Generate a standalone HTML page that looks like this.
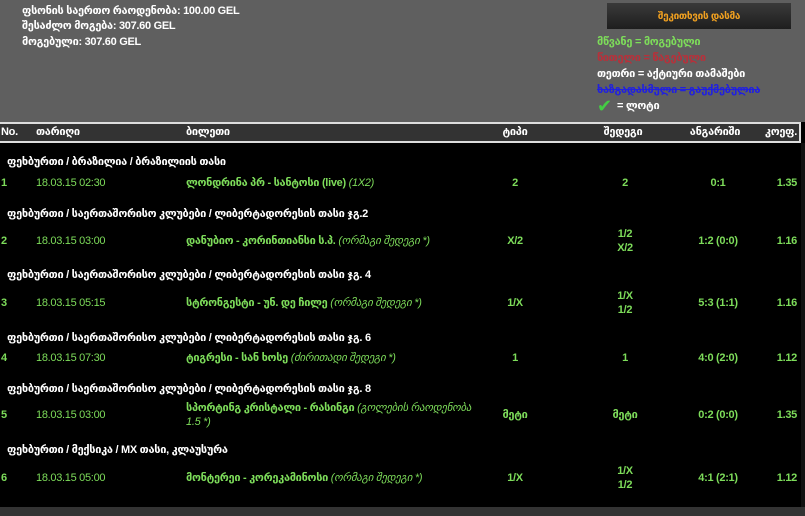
<!DOCTYPE html>
<html><head><meta charset="utf-8"><style>
*{margin:0;padding:0;box-sizing:border-box}
body{width:805px;height:516px;overflow:hidden;background:#000;font-family:"Liberation Sans","DejaVu Sans",sans-serif;font-size:11px;font-weight:bold;position:relative;letter-spacing:-0.3px}
.a{position:absolute;white-space:nowrap;line-height:14px}
#top{position:absolute;left:0;top:0;width:805px;height:122px;background:#5f5f5f}
#hdr{position:absolute;left:0;top:122px;width:801px;height:21px;background:#333;border-top:2px solid #ddd;border-bottom:2px solid #ddd;border-right:2px solid #ddd}
#bot{position:absolute;left:0;top:507px;width:805px;height:9px;background:#333}
#side{position:absolute;left:801px;top:143px;width:4px;height:364px;background:#111}
.w{color:#fff}.g{color:#7ddc5a}.gi{color:#7ddc5a;font-style:italic;font-weight:normal}
.n{font-weight:normal}
.c{transform:translateX(-50%)}.r{transform:translateX(-100%)}
</style></head><body>
<div id="top"></div>
<div class="a w" style="left:22px;top:4px">ფსონის საერთო რაოდენობა: 100.00 GEL</div>
<div class="a w" style="left:22px;top:19px">შესაძლო მოგება: 307.60 GEL</div>
<div class="a w" style="left:22px;top:35px">მოგებული: 307.60 GEL</div>
<div style="position:absolute;left:607px;top:3px;width:184px;height:26px;background:linear-gradient(#3a3a3a,#1e1e1e)"></div>
<div class="a c" style="left:699px;top:10px;color:#f0a020;font-size:10px">შეკითხვის დასმა</div>
<div class="a" style="left:597px;top:35px;color:#7ddc5a">მწვანე = მოგებული</div>
<div class="a" style="left:597px;top:51px;color:#b8303a">წითელი = წაგებული</div>
<div class="a w" style="left:597px;top:67px">თეთრი = აქტიური თამაშები</div>
<div class="a" style="left:597px;top:83px;color:#2020e0;text-decoration:line-through">ხაზგადასმული = გაუქმებულია</div>
<div class="a" style="left:597px;top:97px;color:#4c4;font-size:18px;line-height:18px">✔</div>
<div class="a w" style="left:617px;top:99px">= ლოტი</div>
<div id="hdr"></div>
<div class="a w" style="left:1px;top:125px">No.</div>
<div class="a w" style="left:36px;top:125px">თარიღი</div>
<div class="a w" style="left:186px;top:125px">ბილეთი</div>
<div class="a w c" style="left:515px;top:125px">ტიპი</div>
<div class="a w c" style="left:623px;top:125px">შედეგი</div>
<div class="a w c" style="left:715px;top:125px">ანგარიში</div>
<div class="a w r" style="left:797px;top:125px">კოეფ.</div>

<div class="a w" style="left:7px;top:155px">ფეხბურთი / ბრაზილია / ბრაზილიის თასი</div>
<div class="a g" style="left:1px;top:176px">1</div><div class="a g n" style="left:36px;top:176px">18.03.15 02:30</div>
<div class="a g" style="left:186px;top:176px">ლონდრინა პრ - სანტოსი (live) <span class="gi">(1X2)</span></div>
<div class="a g c" style="left:515px;top:176px">2</div><div class="a g c" style="left:625px;top:176px">2</div><div class="a g c" style="left:718px;top:176px">0:1</div><div class="a g r" style="left:797px;top:176px">1.35</div>

<div class="a w" style="left:7px;top:207px">ფეხბურთი / საერთაშორისო კლუბები / ლიბერტადორესის თასი ჯგ.2</div>
<div class="a g" style="left:1px;top:234px">2</div><div class="a g n" style="left:36px;top:234px">18.03.15 03:00</div>
<div class="a g" style="left:186px;top:234px">დანუბიო - კორინთიანსი ს.პ. <span class="gi">(ორმაგი შედეგი *)</span></div>
<div class="a g c" style="left:515px;top:234px">X/2</div><div class="a g c" style="left:625px;top:227px">1/2</div><div class="a g c" style="left:625px;top:241px">X/2</div><div class="a g c" style="left:718px;top:234px">1:2 (0:0)</div><div class="a g r" style="left:797px;top:234px">1.16</div>

<div class="a w" style="left:7px;top:268px">ფეხბურთი / საერთაშორისო კლუბები / ლიბერტადორესის თასი ჯგ. 4</div>
<div class="a g" style="left:1px;top:296px">3</div><div class="a g n" style="left:36px;top:296px">18.03.15 05:15</div>
<div class="a g" style="left:186px;top:296px">სტრონგესტი - უნ. დე ჩილე <span class="gi">(ორმაგი შედეგი *)</span></div>
<div class="a g c" style="left:515px;top:296px">1/X</div><div class="a g c" style="left:625px;top:289px">1/X</div><div class="a g c" style="left:625px;top:303px">1/2</div><div class="a g c" style="left:718px;top:296px">5:3 (1:1)</div><div class="a g r" style="left:797px;top:296px">1.16</div>

<div class="a w" style="left:7px;top:331px">ფეხბურთი / საერთაშორისო კლუბები / ლიბერტადორესის თასი ჯგ. 6</div>
<div class="a g" style="left:1px;top:351px">4</div><div class="a g n" style="left:36px;top:351px">18.03.15 07:30</div>
<div class="a g" style="left:186px;top:351px">ტიგრესი - სან ხოსე <span class="gi">(ძირითადი შედეგი *)</span></div>
<div class="a g c" style="left:515px;top:351px">1</div><div class="a g c" style="left:625px;top:351px">1</div><div class="a g c" style="left:718px;top:351px">4:0 (2:0)</div><div class="a g r" style="left:797px;top:351px">1.12</div>

<div class="a w" style="left:7px;top:382px">ფეხბურთი / საერთაშორისო კლუბები / ლიბერტადორესის თასი ჯგ. 8</div>
<div class="a g" style="left:1px;top:408px">5</div><div class="a g n" style="left:36px;top:408px">18.03.15 03:00</div>
<div class="a g" style="left:186px;top:401px">სპორტინგ კრისტალი - რასინგი <span class="gi">(გოლების რაოდენობა</span></div>
<div class="a gi" style="left:186px;top:415px">1.5 *)</div>
<div class="a g c" style="left:515px;top:408px">მეტი</div><div class="a g c" style="left:625px;top:408px">მეტი</div><div class="a g c" style="left:718px;top:408px">0:2 (0:0)</div><div class="a g r" style="left:797px;top:408px">1.35</div>

<div class="a w" style="left:7px;top:443px">ფეხბურთი / მექსიკა / MX თასი, კლაუსურა</div>
<div class="a g" style="left:1px;top:471px">6</div><div class="a g n" style="left:36px;top:471px">18.03.15 05:00</div>
<div class="a g" style="left:186px;top:471px">მონტერეი - კორეკამინოსი <span class="gi">(ორმაგი შედეგი *)</span></div>
<div class="a g c" style="left:515px;top:471px">1/X</div><div class="a g c" style="left:625px;top:464px">1/X</div><div class="a g c" style="left:625px;top:478px">1/2</div><div class="a g c" style="left:718px;top:471px">4:1 (2:1)</div><div class="a g r" style="left:797px;top:471px">1.12</div>
<div id="side"></div>
<div id="bot"></div>
</body></html>
